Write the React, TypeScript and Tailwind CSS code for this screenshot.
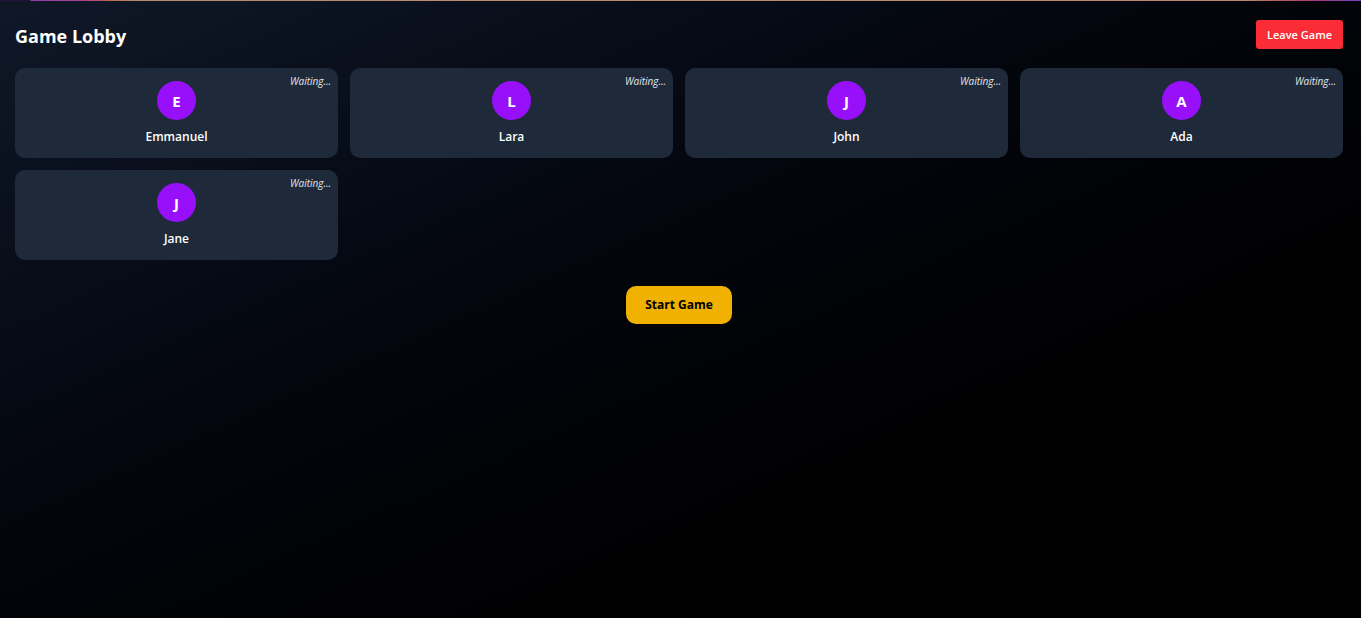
type Player = { id: number; name: string };

const players: Player[] = [
  { id: 1, name: "Emmanuel" },
  { id: 2, name: "Lara" },
  { id: 3, name: "John" },
  { id: 4, name: "Ada" },
  { id: 5, name: "Jane" },
];

function PlayerCard({ name }: { name: string }) {
  return (
    <li className="relative flex flex-col items-center rounded-[10px] bg-[#1e2939] pt-[13px] pb-3">
      <div className="flex size-[39px] items-center justify-center rounded-full bg-[#9810fa] text-[15px] leading-5 font-bold">
        {name.charAt(0)}
      </div>
      <p className="mt-[7px] text-[12px] leading-[19px] font-semibold">{name}</p>
      <span className="absolute top-[7px] right-[7px] text-[10px] leading-[13px] text-[#e5e7eb] italic">
        Waiting...
      </span>
    </li>
  );
}

export default function App() {
  return (
    <div className="flex min-h-screen flex-col bg-linear-to-br from-[#101828] to-black font-['Open_Sans','Noto_Sans',sans-serif] text-white">
      <div className="h-px bg-[linear-gradient(to_right,#26123f_0,#26123f_30px,#8b3fb0_31px,#a8458f_80px,#b85068_100px,#b8704c_110px,#b88a70_140px,#b88a70_calc(100%-120px),#b8605c_calc(100%-85px),#a83a7c_calc(100%-45px),#7a3fb4_calc(100%-15px),#7a3fb4_100%)]" />
      <main className="flex flex-col pt-[19px] pr-[18px] pl-[15px]">
        <header className="mb-[19px] flex items-center justify-between">
          <h1 className="pt-1 text-[18px] leading-[25px] font-bold">Game Lobby</h1>
          <button
            type="button"
            className="cursor-pointer rounded-[3px] bg-[#fb2c36] px-[11px] py-[6px] text-[11px] leading-[17px] font-semibold"
          >
            Leave Game
          </button>
        </header>
        <ul className="grid grid-cols-4 gap-3">
          {players.map((player) => (
            <PlayerCard key={player.id} name={player.name} />
          ))}
        </ul>
        <div className="mt-[26px] flex justify-center">
          <button
            type="button"
            className="cursor-pointer rounded-[10px] bg-[#f0b100] px-[19px] py-[9px] text-[12px] leading-5 font-bold text-black"
          >
            Start Game
          </button>
        </div>
      </main>
    </div>
  );
}
